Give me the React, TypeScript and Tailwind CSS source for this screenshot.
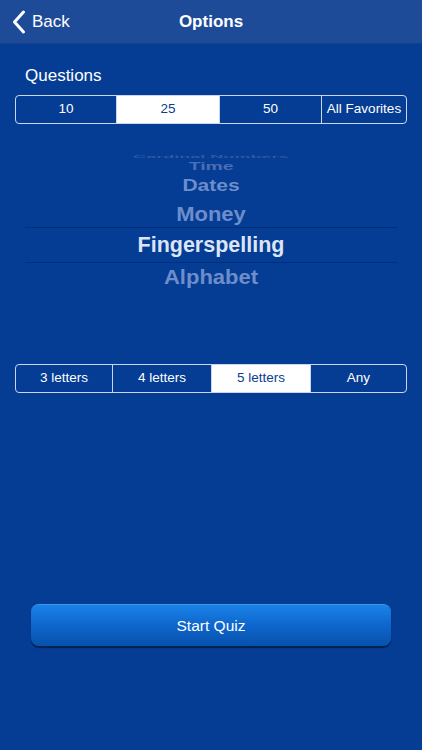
import React from "react";

const font = { fontFamily: '"Liberation Sans", Arial, sans-serif' };

function Seg({ items, sel, widths }: { items: string[]; sel: number; widths: string[] }) {
  return (
    <div className="flex h-[29px] rounded-[4px] border border-[#c9d6ee] overflow-hidden">
      {items.map((t, i) => (
        <div
          key={t}
          className={`${widths[i]} flex items-center justify-center text-[13.5px] ${
            i > 0 ? "border-l border-[#c9d6ee]" : ""
          } ${i === sel ? "bg-white text-[#0a3d8f]" : "text-white"}`}
        >
          {t}
        </div>
      ))}
    </div>
  );
}

export default function App() {
  return (
    <div style={font} className="w-[422px] h-[750px] bg-[#053c94] flex flex-col overflow-hidden">
      <div className="h-[44px] bg-[#1e4b98] border-b border-[#163f85] flex items-center relative shrink-0">
        <div className="flex items-center pl-[12px] text-white text-[17px]">
          <svg width="14" height="24" viewBox="0 0 14 24" className="mr-[6px]">
            <path d="M11.5 2 L2.5 12 L11.5 22" fill="none" stroke="white" strokeWidth="3" strokeLinecap="round" strokeLinejoin="round" />
          </svg>
          Back
        </div>
        <div className="absolute left-0 right-0 text-center text-white text-[17px] font-bold pointer-events-none">Options</div>
      </div>

      <div className="pl-[25px] pt-[22px] text-white text-[17px] leading-[20px]">Questions</div>
      <div className="px-[15px] pt-[9px]">
        <Seg items={["10", "25", "50", "All Favorites"]} sel={1} widths={["w-[100px]", "w-[103px]", "w-[102px]", "flex-1"]} />
      </div>

      <div className="mt-[29px] flex flex-col items-center font-bold text-[#6d8ecb] overflow-hidden">
        <div className="h-[8px] w-full flex items-center justify-center overflow-hidden">
          <div className="text-[19px] leading-[20px] text-[#2f5aa6] scale-y-[0.22] scale-x-[0.95] shrink-0 whitespace-nowrap">Cardinal Numbers</div>
        </div>
        <div className="h-[10px] w-full flex items-center justify-center">
          <div className="text-[20px] leading-[20px] text-[#4b6fb3] scale-y-[0.5] scale-x-[0.97] shrink-0">Time</div>
        </div>
        <div className="h-[30px] w-full flex items-center justify-center">
          <div className="text-[21px] leading-[22px] scale-y-[0.78]">Dates</div>
        </div>
        <div className="h-[26px] w-full flex items-center justify-center">
          <div className="text-[22px] leading-[24px] scale-y-[0.93]">Money</div>
        </div>
        <div className="w-[372px] border-t border-[#022f7c]"></div>
        <div className="h-[34px] flex items-center justify-center text-[21.5px] text-[#dbe5f6]">Fingerspelling</div>
        <div className="w-[372px] border-t border-[#022f7c]"></div>
        <div className="h-[28px] w-full flex items-center justify-center">
          <div className="text-[22px] leading-[24px] scale-y-[0.93]">Alphabet</div>
        </div>
      </div>

      <div className="px-[15px] pt-[73px]">
        <Seg items={["3 letters", "4 letters", "5 letters", "Any"]} sel={2} widths={["w-[96px]", "w-[99px]", "w-[99px]", "flex-1"]} />
      </div>

      <div className="px-[31px] pt-[211px]">
        <div className="h-[42px] rounded-[8px] bg-gradient-to-b from-[#1a82e8] via-[#0e66cc] to-[#0751ac] shadow-[0_2px_1px_#02224f] border-t border-[#3a96ee] flex items-center justify-center text-white text-[15.5px]">
          Start Quiz
        </div>
      </div>
    </div>
  );
}
